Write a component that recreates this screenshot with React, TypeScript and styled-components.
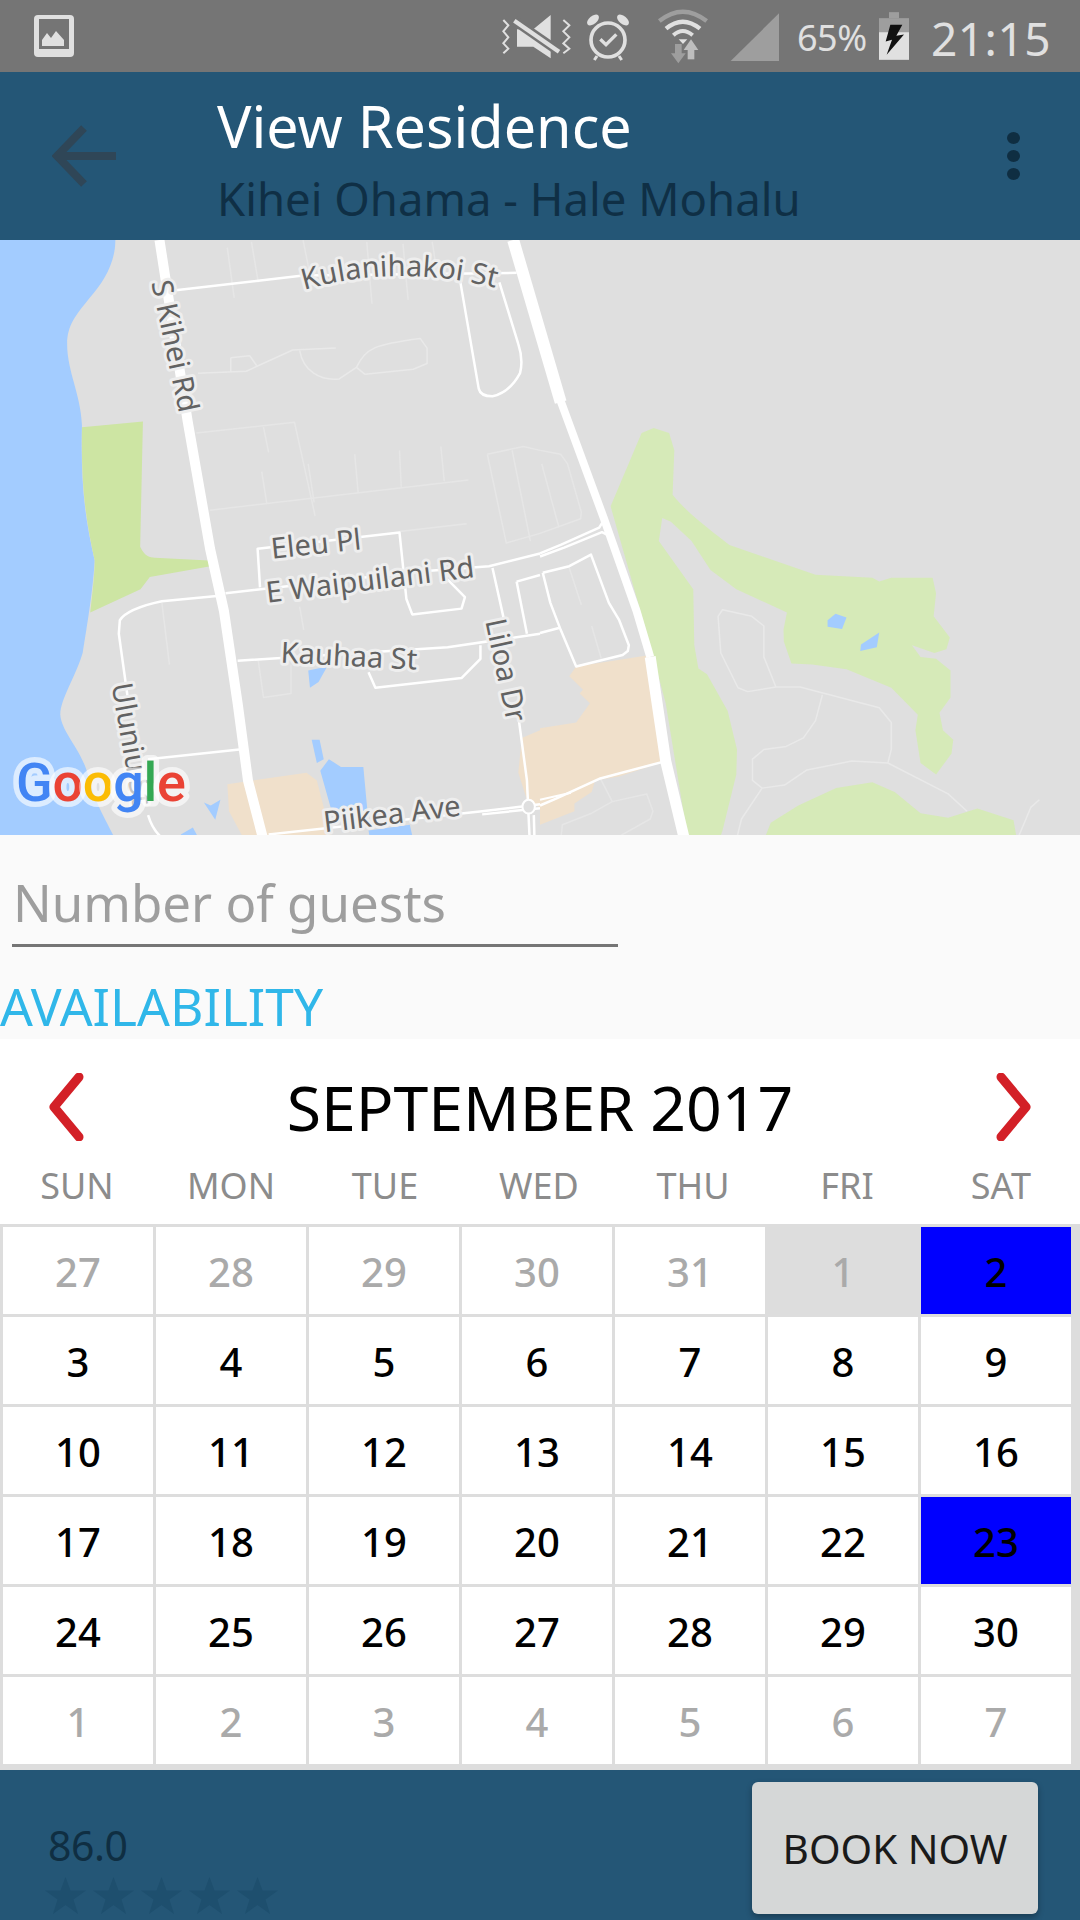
import React from "react";
import styled, { createGlobalStyle } from "styled-components";

const FONT = `"Noto Sans", "Open Sans", sans-serif`;

const Global = createGlobalStyle`
  html, body { margin: 0; padding: 0; background: #fafafa; }
  * { box-sizing: border-box; }
  body { font-family: ${FONT}; }
`;

const Page = styled.div`
  width: 1080px;
  height: 1920px;
  overflow: hidden;
  display: flex;
  flex-direction: column;
  background: #fafafa;
`;

/* ---------- status bar ---------- */
const StatusBar = styled.div`
  height: 72px;
  flex: none;
  background: #757575;
  display: flex;
  align-items: center;
  padding-left: 34px;
  color: #e0e0e0;
`;
const StatusRight = styled.div`
  margin-left: auto;
  display: flex;
  align-items: center;
  height: 72px;
`;
const Percent = styled.span`
  font-size: 36px;
  letter-spacing: -0.5px;
  margin-left: 17px;
  width: 82px;
  line-height: 60px;
  margin-top: 4px;
`;
const Clock = styled.span`
  font-size: 46px;
  line-height: 60px;
  letter-spacing: 0.5px;
  margin-left: 22px;
  width: 149px;
  margin-top: 4px;
`;
const IconBlock = styled.svg`
  display: block;
  flex: none;
`;

const PictureIcon = () => (
  <IconBlock width="40" height="42" viewBox="0 0 40 42">
    <rect width="40" height="42" rx="4" fill="#e0e0e0" />
    <rect x="5" y="4" width="30" height="30" fill="#757575" />
    <polygon points="8,31 8,25 13,18 17,23 22,16 30,25 30,31" fill="#e0e0e0" />
  </IconBlock>
);

const StatusCluster = () => (
  <IconBlock width="300" height="72" viewBox="0 0 900 216">
    {/* muted vibrate */}
    <polygon points="111,88 160,88 212,45 212,175 160,140 111,140" fill="#e0e0e0" />
    <line x1="103" y1="62" x2="237" y2="155" stroke="#757575" strokeWidth="28" />
    <line x1="103" y1="62" x2="237" y2="155" stroke="#e0e0e0" strokeWidth="13" />
    <polyline points="70,60 85,76 70,94 85,112 70,130 85,146 70,160" fill="none" stroke="#e0e0e0" strokeWidth="6" />
    <polyline points="250,60 268,76 250,94 268,112 250,130 268,146 250,160" fill="none" stroke="#e0e0e0" strokeWidth="6" />
    {/* alarm */}
    <circle cx="384" cy="120" r="51" fill="none" stroke="#e0e0e0" strokeWidth="11" />
    <ellipse cx="339" cy="60" rx="21" ry="12" transform="rotate(-40 339 60)" fill="#e0e0e0" />
    <ellipse cx="429" cy="60" rx="21" ry="12" transform="rotate(40 429 60)" fill="#e0e0e0" />
    <polyline points="361,118 378,134 409,103" fill="none" stroke="#e0e0e0" strokeWidth="10" />
    <line x1="351" y1="168" x2="343" y2="180" stroke="#e0e0e0" strokeWidth="9" />
    <line x1="417" y1="168" x2="425" y2="180" stroke="#e0e0e0" strokeWidth="9" />
    {/* wifi */}
    <path d="M538,63 Q608,7 680,63" fill="none" stroke="#9e9e9e" strokeWidth="13" />
    <path d="M558,86 Q608,44 660,86" fill="none" stroke="#e0e0e0" strokeWidth="13" />
    <path d="M580,106 Q608,80 638,106" fill="none" stroke="#e0e0e0" strokeWidth="12" />
    <polygon points="596,118 622,118 609,132" fill="#e0e0e0" />
    <rect x="585" y="132" width="20" height="30" fill="#9e9e9e" />
    <polygon points="573,160 617,160 595,190" fill="#9e9e9e" />
    <polygon points="611,150 655,150 633,118" fill="#bdbdbd" />
    <rect x="623" y="150" width="20" height="28" fill="#bdbdbd" />
    {/* signal */}
    <polygon points="752,183 897,40 897,183" fill="#9e9e9e" />
  </IconBlock>
);

const BatteryIcon = () => (
  <IconBlock width="30" height="48" viewBox="297 37 90 143">
    <rect x="327" y="37" width="30" height="18" fill="#9e9e9e" />
    <rect x="297" y="55" width="90" height="42" fill="#9e9e9e" />
    <rect x="297" y="97" width="90" height="83" fill="#e0e0e0" />
    <polygon points="331,75 367,75 349,108 372,104 320,165 336,120 317,125" fill="#111" />
  </IconBlock>
);

/* ---------- header ---------- */
const Header = styled.div`
  height: 168px;
  flex: none;
  background: #245676;
  display: flex;
  align-items: center;
`;
const BackSlot = styled.div`
  width: 217px;
  flex: none;
  padding-left: 52px;
`;
const TitleColumn = styled.div`
  flex: 1;
  display: flex;
  flex-direction: column;
  padding-top: 8px;
`;
const Title = styled.div`
  color: #fff;
  font-size: 57.5px;
  line-height: 68px;
`;
const Subtitle = styled.div`
  color: #0f2f45;
  font-size: 45.5px;
  line-height: 60px;
  margin-top: 8px;
`;
const MoreDots = styled.div`
  width: 13px;
  margin-right: 60px;
  display: flex;
  flex-direction: column;
  gap: 6px;
`;
const Dot = styled.span`
  display: block;
  width: 13px;
  height: 12px;
  border-radius: 50%;
  background: #0f2e42;
`;

/* ---------- map ---------- */
const MapSvg = styled.svg`
  display: block;
  flex: none;
  background: #dfdfdf;
`;
const MapLabel = styled.text`
  font-family: ${FONT};
  font-size: 29px;
  fill: #626262;
  stroke: #eeeeee;
  stroke-width: 6px;
  paint-order: stroke;
  stroke-linejoin: round;
`;
const GoogleWord = styled.text`
  font-family: "Roboto", ${FONT};
  font-size: 54px;
  font-weight: 500;
  letter-spacing: -0.3px;
  stroke: rgba(255, 255, 255, 0.62);
  stroke-width: 11px;
  paint-order: stroke;
  stroke-linejoin: round;
`;

const Road = ({ d, w = 2, c = "#fff" }: { d: string; w?: number; c?: string }) => (
  <path d={d} fill="none" stroke={c} strokeWidth={w} strokeLinejoin="round" vectorEffect="non-scaling-stroke" />
);

const WATER = "#a3ccff";
const PARK = "#d6eab8";
const PARK2 = "#cde5a3";
const SAND = "#f0e0cb";
const FAINT = "#e6e6e6";
const FAINT2 = "#e9e9e9";

const MapView = () => (
  <MapSvg width="1080" height="595" viewBox="0 0 1080 595">
    <g transform="scale(0.3444 0.386)">
      <path
        d="M0,0 L335,0 C335,60 300,110 260,150 C220,195 195,220 195,270 C195,340 235,400 238,480 C235,600 240,700 275,830 C270,900 260,960 240,1070 C220,1130 175,1190 175,1230 C180,1280 240,1320 260,1400 C280,1470 320,1520 335,1555 L0,1555 Z"
        fill={WATER}
      />
      <path
        d="M238,485 L415,470 L407,795 C420,820 435,823 450,823 L607,830 L607,846 L435,873 L408,905 L262,965 C270,900 275,860 275,830 C250,730 235,640 238,485 Z"
        fill={PARK2}
      />
      <path d="M660,1410 L890,1380 L920,1400 L965,1555 L710,1555 L665,1480 Z" fill={SAND} />
      <path d="M1568,1270 L1515,1290 L1505,1380 L1530,1450 L1568,1470 Z" fill={SAND} />
      <polygon points="905,1295 928,1295 940,1345 920,1355" fill={WATER} />
      <polygon points="930,1375 955,1345 990,1365 1055,1365 1068,1490 1000,1480 960,1470" fill={WATER} />
      <polygon points="1070,1530 1190,1515 1200,1555 1075,1555" fill={WATER} />
      <polygon points="895,1115 950,1105 925,1145 900,1160" fill={WATER} />
      <polygon points="592,1457 612,1465 640,1450 625,1502" fill={WATER} />
      <polygon points="525,1540 560,1522 580,1555 530,1555" fill={WATER} />

      {/* faint lanes */}
      <Road c={FAINT} w={1.5} d="M660,20 L680,150 M730,5 L750,110 M880,0 L900,90 M1065,5 L1080,165 M1170,10 L1185,155 M1255,5 L1270,90" />
      <Road c={FAINT2} w={1.5} d="M575,345 L715,340 L850,285 L975,280 M670,305 L725,300 L745,325 M670,305 L670,340 M870,285 C880,340 930,365 985,360 L1035,330 C1060,280 1090,270 1220,255 L1240,280 L1240,320 L1200,335 L1060,348 L1035,330" />
      <Road c={FAINT} w={1.5} d="M570,500 L855,472 L915,715 M765,485 L780,550 M760,600 L775,685 M895,580 L912,680 M1030,555 L1040,655 M1160,545 L1165,640 M1280,535 L1290,625 M610,700 L1360,622" />
      <Road c={FAINT} w={1.5} d="M1160,755 L1355,735 M1415,555 L1470,785 L1568,760 M1415,555 L1520,535 L1568,545 M1487,545 L1540,780" />
      <Road c={FAINT} w={1.5} d="M470,940 L492,1100 M870,950 L882,1010 M750,1090 L765,1185 L845,1175 L845,1100" />

      {/* streets */}
      <Road d="M510,130 L880,92 L1500,85" w={2.5} />
      <Road d="M1335,100 L1390,385 Q1395,405 1430,405 Q1480,395 1510,345 Q1520,310 1505,270 L1450,110" w={2.5} />
      <Road d="M755,900 L748,800 L1160,758 L1180,930 L1197,970 L1340,955 L1350,925 L1300,880" w={2.5} />
      <Road d="M655,915 L1200,860 L1420,845 L1568,812" w={2.5} />
      <Road d="M630,922 L470,936 Q370,955 348,985 L345,1020 L370,1180" w={2.5} />
      <Road d="M690,1090 L1300,1055 L1568,1020 M1395,1050 L1395,1085 L1340,1135 L1090,1160 L1070,1120" w={2.5} />
      <Road d="M1430,850 L1465,990 M1500,1200 L1530,1400 L1538,1555 M1550,1490 L1552,1555" w={2.5} />
      <Road d="M1500,885 L1568,868 M1500,885 L1530,1020" w={2.5} />
      <Road d="M430,1345 L695,1320" w={2.5} />
      <Road d="M780,1540 L1400,1480 L1568,1462 M1400,1488 L1568,1472" w={2.5} />
      <Road d="M430,1490 Q445,1535 480,1555" w={2.5} />
      <circle cx="1535" cy="1468" r="18" fill="#dfdfdf" stroke="#fff" strokeWidth="2" vectorEffect="non-scaling-stroke" />
      <Road d="M463,0 L545,470 L610,800 L650,960 L690,1200 L720,1400 L765,1555" w={10} />
      <Road d="M1490,0 L1628,420" w={12} />
    </g>

    <g transform="translate(540 0) scale(0.3444 0.386)">
      <path
        d="M105,1105 L320,1075 L365,1350 L230,1390 L160,1400 L150,1430 L100,1460 L100,1480 L0,1515 L0,1265 L105,1250 L145,1200 L115,1175 L125,1165 L85,1130 Z"
        fill={SAND}
      />
      <path
        d="M205,690 L295,500 L330,487 L375,500 L390,545 L385,660 C430,710 500,755 550,790 L800,867 L965,875 L985,885 L1020,875 L1140,875 L1150,915 L1143,975 L1190,1030 L1180,1060 L1145,1070 L1080,1050 L1105,1080 L1150,1085 L1192,1115 L1192,1185 L1160,1225 L1170,1270 L1200,1295 L1195,1330 L1150,1385 L1105,1355 L1090,1270 L1097,1230 L1020,1160 L890,1112 L790,1100 L730,1097 L708,1040 L707,1010 L717,965 L570,905 L495,855 L440,780 L380,730 L355,720 L345,780 L445,905 L448,1050 L460,1110 L485,1125 L545,1220 L572,1320 L570,1385 L530,1530 L520,1555 L430,1555 L365,1200 L320,1050 Z"
        fill={PARK}
      />
      <path d="M650,1555 L670,1510 L750,1465 L860,1420 L965,1405 L1030,1430 L1105,1485 L1185,1497 L1270,1473 L1375,1503 L1385,1555 Z" fill={PARK} />
      <polygon points="835,985 858,968 890,978 877,1008 835,1002" fill={WATER} />
      <polygon points="932,1048 985,1017 978,1055 930,1065" fill={WATER} />

      <Road c={FAINT} w={1.5} d="M0,545 L60,555 L80,580 L120,705 L118,722 L0,760 M5,580 L55,745 M85,850 L120,945 M150,1000 L178,1085" />
      <Road c={FAINT2} w={1.5} d="M685,1158 L650,1080 L650,1000 L615,975 L530,958 L517,975 L525,1070 L575,1160 L603,1170 L685,1158 L755,1158 L985,1212 L1020,1250 L1020,1320 L1010,1355" />
      <Road c={FAINT2} w={1.5} d="M820,1178 L800,1245 L765,1290 L715,1312 L650,1320 L617,1345 L617,1400 L645,1420 L710,1412 L775,1373 L905,1350 L1010,1355 L1185,1435 L1240,1480" />
      <Road c={FAINT2} w={1.5} d="M645,1420 L585,1500 L570,1555 M1385,1555 L1425,1470 L1450,1450" />
      <Road c={FAINT} w={1.5} d="M175,1395 L210,1455 L310,1435 L328,1480 L320,1500 L210,1555 M210,1455 L150,1485 L65,1515 L60,1555" />

      <Road d="M0,812 L60,790 L172,745 L188,722" w={2.5} />
      <Road d="M0,820 L70,797 L180,757 L203,767" w={2.5} />
      <Road d="M8,862 L85,845 L148,815 L200,940 L230,985 L258,1050 L255,1065 L240,1075 L105,1105 L60,1010 L30,940 L8,862" w={2.5} />
      <Road d="M0,1018 L55,1005" w={2.5} />
      <Road d="M0,1465 L45,1448 L175,1395 L365,1350" w={2.5} />
      <Road d="M0,1450 L90,1432" w={2} />
      <Road d="M58,412 L185,720 L280,960 L320,1080" w={8} />
      <Road d="M320,1080 L365,1350 L420,1555" w={11} />
    </g>

    <path id="kulani" d="M304,50 Q400,22 504,50" fill="none" />
    <MapLabel>
      <textPath href="#kulani">Kulanihakoi St</textPath>
    </MapLabel>
    <MapLabel x="0" y="10" transform="translate(175 106) rotate(78)" textAnchor="middle">S Kihei Rd</MapLabel>
    <MapLabel x="0" y="10" transform="translate(316 304) rotate(-6)" textAnchor="middle">Eleu Pl</MapLabel>
    <MapLabel x="0" y="10" transform="translate(370 340) rotate(-7)" textAnchor="middle">E Waipuilani Rd</MapLabel>
    <MapLabel x="0" y="10" transform="translate(349 416) rotate(3)" textAnchor="middle">Kauhaa St</MapLabel>
    <MapLabel x="0" y="10" transform="translate(506 430) rotate(78)" textAnchor="middle">Liloa Dr</MapLabel>
    <MapLabel x="0" y="10" transform="translate(132 504) rotate(80)" textAnchor="middle">Uluniu St</MapLabel>
    <MapLabel x="0" y="10" transform="translate(392 574) rotate(-7)" textAnchor="middle">Piikea Ave</MapLabel>

    <GoogleWord x="16" y="561">
      <tspan fill="#4285f4">G</tspan>
      <tspan fill="#ea4335">o</tspan>
      <tspan fill="#fbbc05">o</tspan>
      <tspan fill="#4285f4">g</tspan>
      <tspan fill="#34a853">l</tspan>
      <tspan fill="#ea4335">e</tspan>
    </GoogleWord>
  </MapSvg>
);

/* ---------- form ---------- */
const FormArea = styled.div`
  height: 204px;
  flex: none;
  background: #fafafa;
  display: flex;
  flex-direction: column;
`;
const GuestField = styled.div`
  width: 606px;
  height: 112px;
  margin-left: 12px;
  padding: 32px 0 0 1px;
  border-bottom: 3px solid #757575;
  color: #9e9e9e;
  font-size: 51px;
  line-height: 70px;
`;
const SectionTitle = styled.div`
  color: #30b7e9;
  font-size: 51.5px;
  line-height: 60px;
  margin-top: 29px;
`;

/* ---------- calendar ---------- */
const Calendar = styled.div`
  flex: none;
  background: #fff;
`;
const MonthBar = styled.div`
  height: 126px;
  display: flex;
  align-items: center;
  justify-content: space-between;
  padding: 10px 46px 0 46px;
`;
const MonthName = styled.div`
  color: #000;
  font-size: 62.5px;
  line-height: 70px;
`;
const WeekRow = styled.div`
  height: 59px;
  display: grid;
  grid-template-columns: repeat(7, 154px);
`;
const WeekDay = styled.div`
  text-align: center;
  color: #8c8c8c;
  font-size: 36px;
  line-height: 42px;
`;
const DayGrid = styled.div`
  display: grid;
  grid-template-columns: repeat(7, 150px);
  grid-auto-rows: 87px;
  gap: 3px;
  padding: 3px 9px 6px 3px;
  background: #dddddd;
`;
type Tone = "muted" | "normal" | "blocked" | "booked";
const toneBg: Record<Tone, string> = { muted: "#fff", normal: "#fff", blocked: "#dddddd", booked: "#0000ff" };
const toneFg: Record<Tone, string> = { muted: "#aaaaaa", normal: "#000", blocked: "#aaaaaa", booked: "#000" };
const DayCell = styled.div<{ $tone: Tone }>`
  display: flex;
  align-items: center;
  justify-content: center;
  padding-top: 2px;
  background: ${(p) => toneBg[p.$tone]};
  color: ${(p) => toneFg[p.$tone]};
  font-size: 40px;
  font-weight: 500;
`;

const Chevron = ({ dir }: { dir: "left" | "right" }) => (
  <IconBlock width="40" height="68" viewBox="0 0 40 68">
    <polyline
      points={dir === "left" ? "33,4 8,34 33,64" : "7,4 32,34 7,64"}
      fill="none"
      stroke="#d32027"
      strokeWidth="9"
      strokeLinejoin="round"
      strokeLinecap="round"
    />
  </IconBlock>
);

/* ---------- footer ---------- */
const Footer = styled.div`
  flex: 1;
  background: #245676;
  display: flex;
  justify-content: space-between;
  padding: 12px 42px 0 45px;
`;
const Rating = styled.div`
  display: flex;
  flex-direction: column;
  padding-top: 35px;
`;
const Score = styled.div`
  color: #0f2e42;
  font-size: 41px;
  line-height: 56px;
  padding-left: 3px;
  letter-spacing: -0.5px;
`;
const Stars = styled.div`
  display: flex;
  gap: 7px;
  margin-top: 4px;
`;
const BookButton = styled.button`
  width: 286px;
  height: 132px;
  border: 0;
  border-radius: 6px;
  background: #d5d7d7;
  color: #1a1a1a;
  font-family: ${FONT};
  font-size: 40.5px;
  box-shadow: 0 3px 6px rgba(0, 0, 0, 0.3);
  padding: 0;
`;

const Star = () => (
  <IconBlock width="41" height="37" viewBox="0 0 41 37">
    <polygon points="20.5,0 25.5,13.5 41,13.5 28.5,22.5 33,37 20.5,28 8,37 12.5,22.5 0,13.5 15.5,13.5" fill="#1e4f6e" />
  </IconBlock>
);

const WEEK = ["SUN", "MON", "TUE", "WED", "THU", "FRI", "SAT"];
const blocked = new Set([5]);
const booked = new Set([6, 27]);
const DAYS = [27, 28, 29, 30, 31, 1, 2, ...Array.from({ length: 28 }, (_, i) => i + 3), 1, 2, 3, 4, 5, 6, 7];
const toneOf = (i: number): Tone => {
  if (blocked.has(i)) return "blocked";
  if (booked.has(i)) return "booked";
  return i < 5 || i >= 35 ? "muted" : "normal";
};

export default function App() {
  return (
    <Page>
      <Global />
      <StatusBar>
        <PictureIcon />
        <StatusRight>
          <StatusCluster />
          <Percent>65%</Percent>
          <BatteryIcon />
          <Clock>21:15</Clock>
        </StatusRight>
      </StatusBar>
      <Header>
        <BackSlot>
          <IconBlock width="64" height="62" viewBox="0 0 64 62">
            <polyline points="32,3 5,31 32,59" fill="none" stroke="#2f4657" strokeWidth="8" />
            <line x1="6" y1="31" x2="64" y2="31" stroke="#2f4657" strokeWidth="8" />
          </IconBlock>
        </BackSlot>
        <TitleColumn>
          <Title>View Residence</Title>
          <Subtitle>Kihei Ohama - Hale Mohalu</Subtitle>
        </TitleColumn>
        <MoreDots>
          <Dot />
          <Dot />
          <Dot />
        </MoreDots>
      </Header>
      <MapView />
      <FormArea>
        <GuestField>Number of guests</GuestField>
        <SectionTitle>AVAILABILITY</SectionTitle>
      </FormArea>
      <Calendar>
        <MonthBar>
          <Chevron dir="left" />
          <MonthName>SEPTEMBER 2017</MonthName>
          <Chevron dir="right" />
        </MonthBar>
        <WeekRow>
          {WEEK.map((d) => (
            <WeekDay key={d}>{d}</WeekDay>
          ))}
        </WeekRow>
        <DayGrid>
          {DAYS.map((d, i) => (
            <DayCell key={i} $tone={toneOf(i)}>
              {d}
            </DayCell>
          ))}
        </DayGrid>
      </Calendar>
      <Footer>
        <Rating>
          <Score>86.0</Score>
          <Stars>
            {[0, 1, 2, 3, 4].map((n) => (
              <Star key={n} />
            ))}
          </Stars>
        </Rating>
        <BookButton>BOOK NOW</BookButton>
      </Footer>
    </Page>
  );
}
